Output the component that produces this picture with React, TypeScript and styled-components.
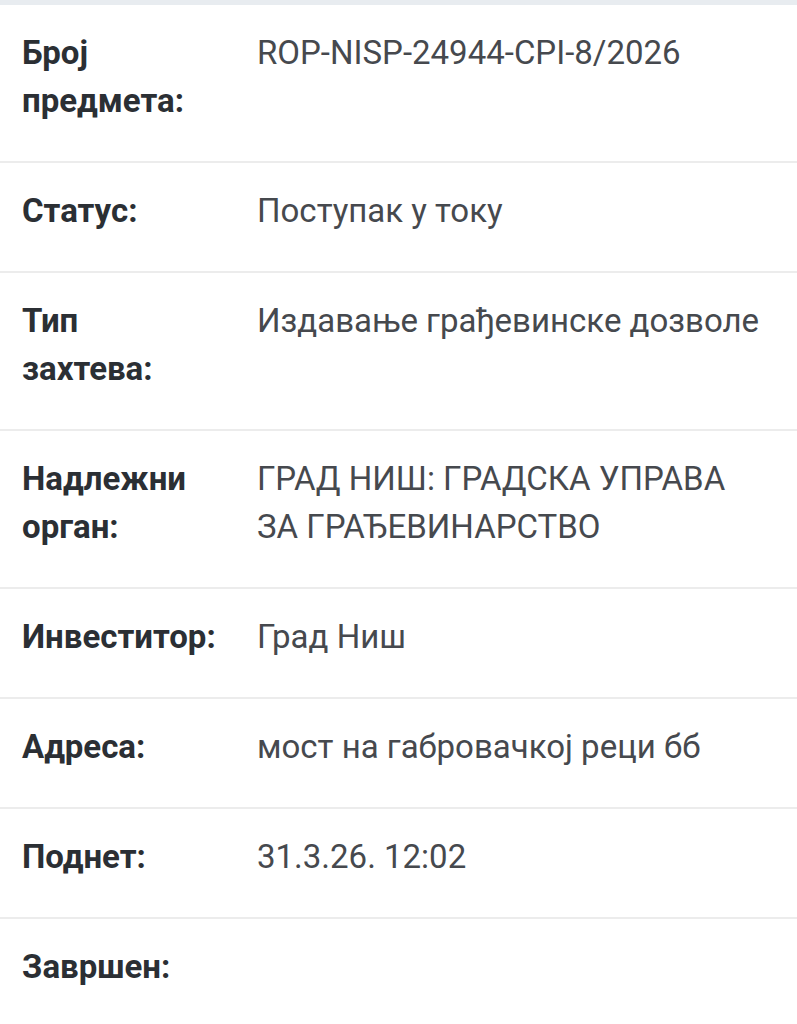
import styled, { createGlobalStyle } from 'styled-components'

const GlobalStyle = createGlobalStyle`
  html, body {
    margin: 0;
    padding: 0;
    background: #ffffff;
  }
  body {
    font-family: Roboto, 'Noto Sans', 'Liberation Sans', sans-serif;
    -webkit-font-smoothing: antialiased;
  }
`

const Panel = styled.div`
  width: 100%;
  border-top: 5px solid #e8ecf0;
  background: #ffffff;
`

const Row = styled.div`
  display: grid;
  grid-template-columns: 191px 1fr;
  column-gap: 44px;
  padding: 24px 20px 36px 22px;
  border-bottom: 2px solid #ececec;
  font-size: 33px;
  line-height: 48px;

  &:last-child {
    border-bottom: none;
  }
`

const Label = styled.div`
  font-weight: 700;
  color: #2b2f34;
  white-space: pre-line;
`

const Value = styled.div`
  font-weight: 400;
  color: #46494e;
  white-space: pre-line;
`

type Field = { label: string; value: string }

const fields: Field[] = [
  { label: 'Број\nпредмета:', value: 'ROP-NISP-24944-CPI-8/2026' },
  { label: 'Статус:', value: 'Поступак у току' },
  { label: 'Тип\nзахтева:', value: 'Издавање грађевинске дозволе' },
  { label: 'Надлежни\nорган:', value: 'ГРАД НИШ: ГРАДСКА УПРАВА\nЗА ГРАЂЕВИНАРСТВО' },
  { label: 'Инвеститор:', value: 'Град Ниш' },
  { label: 'Адреса:', value: 'мост на габровачкој реци бб' },
  { label: 'Поднет:', value: '31.3.26. 12:02' },
  { label: 'Завршен:', value: '' },
]

export default function App() {
  return (
    <>
      <GlobalStyle />
      <Panel>
        {fields.map(field => (
          <Row key={field.label}>
            <Label>{field.label}</Label>
            <Value>{field.value}</Value>
          </Row>
        ))}
      </Panel>
    </>
  )
}
